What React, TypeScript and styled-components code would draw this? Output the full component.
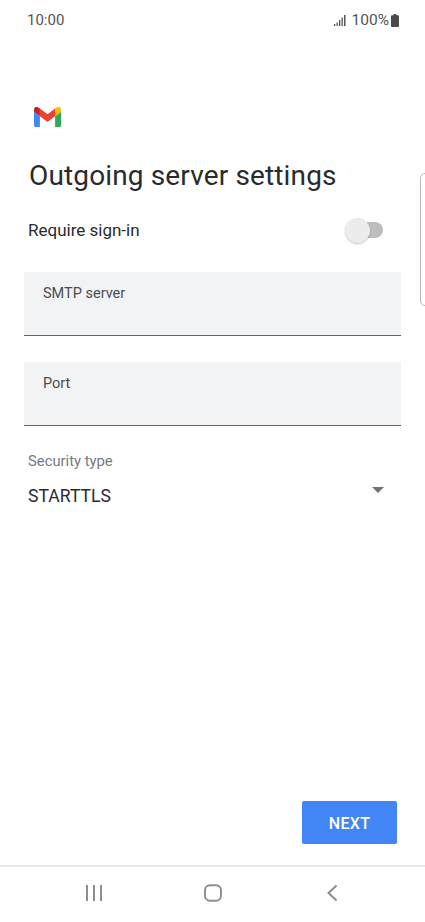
import React from "react";
import styled, { createGlobalStyle } from "styled-components";

const Global = createGlobalStyle`
  html, body { margin: 0; padding: 0; background: #fff; }
  body { font-family: Roboto, "Liberation Sans", sans-serif; }
`;

const Screen = styled.div`
  position: relative;
  width: 425px;
  height: 922px;
  overflow: hidden;
  display: flex;
  flex-direction: column;
  background: #fff;
  color: #202124;
`;

const StatusBar = styled.div`
  height: 40px;
  flex: none;
  padding: 0 26px 0 27px;
  display: flex;
  align-items: center;
  justify-content: space-between;
  font-size: 15px;
  color: #555;
`;

const StatusRight = styled.div`
  display: flex;
  align-items: center;
`;

const Percent = styled.span`
  margin: 0 2px 0 6px;
  font-size: 15.5px;
`;

const Main = styled.main`
  flex: 1;
  display: flex;
  flex-direction: column;
  padding: 67px 24px 0;
`;

const Logo = styled.svg`
  width: 27px;
  height: 20px;
  margin-left: 10px;
  display: block;
`;

const Title = styled.h1`
  margin: 31px 0 0 5px;
  font-size: 28px;
  line-height: 36px;
  font-weight: 400;
  letter-spacing: 0.14px;
  color: #2a2b2e;
`;

const ToggleRow = styled.div`
  display: flex;
  align-items: center;
  justify-content: space-between;
  height: 36px;
  margin: 18px 18px 0 4px;
  font-size: 17px;
  color: #2a2b2e;
`;

const Track = styled.div`
  position: relative;
  width: 37px;
  height: 16px;
  border-radius: 8px;
  background: #bdbdbd;
`;

const Thumb = styled.div`
  position: absolute;
  left: -1px;
  top: -4px;
  width: 25px;
  height: 25px;
  border-radius: 50%;
  background: #ececec;
  box-shadow: 0 1px 2px rgba(0, 0, 0, 0.22);
`;

const Field = styled.div<{ $gap: number }>`
  box-sizing: border-box;
  height: 64px;
  margin-top: ${(p) => p.$gap}px;
  padding: 13px 19px 0;
  background: #f1f3f4;
  border-bottom: 1px solid #5f6368;
  font-size: 14.5px;
  line-height: 18px;
  color: #4a4d51;
`;

const SelectLabel = styled.div`
  margin: 26px 0 0 4px;
  font-size: 14.8px;
  line-height: 18px;
  color: #777a7e;
`;

const SelectRow = styled.div`
  display: flex;
  justify-content: space-between;
  margin: 15px 17px 0 4px;
  font-size: 17.6px;
  line-height: 22px;
  color: #2a2b2e;
`;

const Caret = styled.div`
  width: 0;
  height: 0;
  margin-top: 2px;
  border-left: 6px solid transparent;
  border-right: 6px solid transparent;
  border-top: 6px solid #6f7378;
`;

const Footer = styled.div`
  flex: none;
  display: flex;
  justify-content: flex-end;
  padding: 0 28px 21px 0;
`;

const NextButton = styled.button`
  width: 95px;
  height: 43px;
  padding: 2px 0 0;
  border: none;
  border-radius: 2px;
  background: #4285f4;
  color: #fff;
  font-family: Roboto, "Liberation Sans", sans-serif;
  font-size: 16px;
  font-weight: 500;
  letter-spacing: 0.3px;
`;

const NavBar = styled.nav`
  flex: none;
  height: 57px;
  box-sizing: border-box;
  border-top: 2px solid #e8e8e8;
  display: grid;
  grid-template-columns: 190px 48px 190px;
  justify-items: center;
  align-items: center;
  padding-bottom: 3px;
  margin-left: -1px;
`;

const EdgeHandle = styled.div`
  position: absolute;
  left: 420px;
  top: 173px;
  width: 10px;
  height: 133px;
  box-sizing: border-box;
  border: 1px solid #b4b4b4;
  border-radius: 5px;
`;

const NavIcon = styled.svg`
  display: block;
  fill: none;
  stroke: #8e8e8e;
`;

export default function App() {
  return (
    <Screen>
      <Global />
      <StatusBar>
        <span>10:00</span>
        <StatusRight>
          <svg width="12" height="11" viewBox="0 0 12 11" fill="#555">
            <rect x="0" y="9" width="1.3" height="2" />
            <rect x="2.5" y="7.5" width="1.3" height="3.5" />
            <rect x="5" y="5" width="1.3" height="6" />
            <rect x="7.5" y="2.5" width="1.3" height="8.5" />
            <rect x="10" y="0" width="1.5" height="11" />
          </svg>
          <Percent>100%</Percent>
          <svg width="8" height="13" viewBox="0 0 8 13" fill="#4a4a4a">
            <path d="M2.6 0h2.8v1.3H7a1 1 0 0 1 1 1V12a1 1 0 0 1-1 1H1a1 1 0 0 1-1-1V2.3a1 1 0 0 1 1-1h1.6z" />
          </svg>
        </StatusRight>
      </StatusBar>

      <Main>
        <Logo viewBox="0 0 27 20">
          <path d="M1.8 20H5.9V9.2L0 4.8V18.2C0 19.2 0.8 20 1.8 20Z" fill="#4285f4" />
          <path d="M21.1 20H25.2C26.2 20 27 19.2 27 18.2V4.8L21.1 9.2Z" fill="#34a853" />
          <path d="M21.1 1.5V9.2L27 4.8V2.5C27 0.3 24.5-0.9 22.8 0.4Z" fill="#fbbc04" />
          <path d="M5.9 9.2V1.5L13.5 7.2L21.1 1.5V9.2L13.5 14.9Z" fill="#ea4335" />
          <path d="M0 2.5V4.8L5.9 9.2V1.5L4.2 0.4C2.5-0.9 0 0.3 0 2.5Z" fill="#c5221f" />
        </Logo>
        <Title>Outgoing server settings</Title>
        <ToggleRow>
          <span>Require sign-in</span>
          <Track>
            <Thumb />
          </Track>
        </ToggleRow>
        <Field $gap={24}>SMTP server</Field>
        <Field $gap={26}>Port</Field>
        <SelectLabel>Security type</SelectLabel>
        <SelectRow>
          <span>STARTTLS</span>
          <Caret />
        </SelectRow>
      </Main>

      <Footer>
        <NextButton>NEXT</NextButton>
      </Footer>

      <NavBar>
        <NavIcon width="18" height="18" viewBox="0 0 18 18" strokeWidth="2">
          <path d="M2 1v16M9 1v16M16 1v16" />
        </NavIcon>
        <NavIcon width="20" height="18" viewBox="0 0 20 18" strokeWidth="2">
          <rect x="2" y="1.2" width="16" height="15.6" rx="5" />
        </NavIcon>
        <NavIcon width="14" height="18" viewBox="0 0 14 18" strokeWidth="2">
          <path d="M11.5 1.5L3.5 9l8 7.5" />
        </NavIcon>
      </NavBar>
      <EdgeHandle />
    </Screen>
  );
}
